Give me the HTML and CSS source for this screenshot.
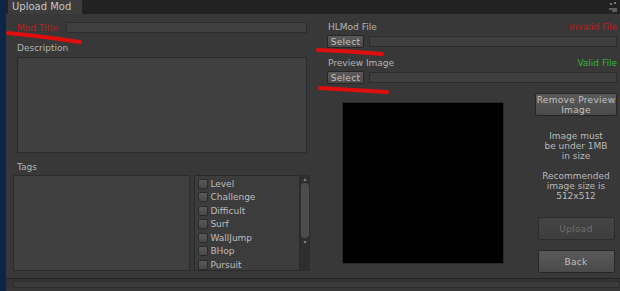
FILE: index.html
```html
<!DOCTYPE html>
<html lang="en">
<head>
    <meta charset="UTF-8">
    <title>Upload Mod</title>
    <link rel="stylesheet" href="styles.css">
</head>
<body>
    <div class="window">
        <div class="edge"></div>
        <div class="panel">
            <div class="tabbar">
                <div class="tab">Upload Mod</div>
                <div class="corner">
                    <svg width="10" height="12" viewBox="0 0 10 12">
                        <path d="M2 2h2v2H2zM6 1h2v2H6z" fill="#777"/>
                        <path d="M1 8h8M4 10h5" stroke="#999" stroke-width="1"/>
                    </svg>
                </div>
            </div>

            <div class="content">
                <div class="left">
                    <div class="title-row">
                        <span class="label red">Mod Title</span>
                        <div class="field title-field"></div>
                    </div>
                    <div class="label desc-label">Description</div>
                    <div class="field desc-field"></div>
                    <div class="label tags-label">Tags</div>
                    <div class="tags-row">
                        <div class="field tags-field"></div>
                        <div class="checklist">
                            <div class="check"><span class="box"></span>Level</div>
                            <div class="check"><span class="box"></span>Challenge</div>
                            <div class="check"><span class="box"></span>Difficult</div>
                            <div class="check"><span class="box"></span>Surf</div>
                            <div class="check"><span class="box"></span>WallJump</div>
                            <div class="check"><span class="box"></span>BHop</div>
                            <div class="check"><span class="box"></span>Pursuit</div>
                        </div>
                        <div class="scrollbar">
                            <span class="arrow">&#9652;</span>
                            <div class="thumb"></div>
                            <span class="arrow">&#9662;</span>
                        </div>
                    </div>
                </div>

                <div class="right">
                    <div class="file-head">
                        <span class="label">HLMod File</span>
                        <span class="status red">Invalid File</span>
                    </div>
                    <div class="file-row">
                        <button class="btn small">Select</button>
                        <div class="field path"></div>
                    </div>
                    <div class="file-head second">
                        <span class="label">Preview Image</span>
                        <span class="status green">Valid File</span>
                    </div>
                    <div class="file-row">
                        <button class="btn small">Select</button>
                        <div class="field path"></div>
                    </div>

                    <div class="preview-area">
                        <div class="preview"></div>
                        <div class="side">
                            <button class="btn remove">Remove Preview<br>Image</button>
                            <p class="note">Image must<br>be under 1MB<br>in size</p>
                            <p class="note">Recommended<br>image size is<br>512x512</p>
                            <button class="btn big disabled">Upload</button>
                            <button class="btn big">Back</button>
                        </div>
                    </div>
                </div>
            </div>

            <div class="hscroll"><div class="hbar"></div></div>
        </div>
    </div>

    <!-- hand-drawn red marks from the screenshot -->
    <svg class="marks" width="620" height="291" viewBox="0 0 620 291">
        <path d="M8 33 Q40 36 80 42" />
        <path d="M318 50 Q350 51 382 54" />
        <path d="M320 88 Q352 90 387 92" />
    </svg>
</body>
</html>
```

FILE: styles.css
```css
body {
    margin: 0;
    width: 620px;
    height: 291px;
    overflow: hidden;
    background-color: #383838;
    font-family: "DejaVu Sans", sans-serif;
    font-size: 9px;
    color: #b8b8b8;
    position: relative;
}
.window {
    display: flex;
    height: 291px;
}
.edge {
    width: 6px;
    background-color: #0c2446;
    flex-shrink: 0;
}
.panel {
    flex: 1;
    display: flex;
    flex-direction: column;
}
.tabbar {
    height: 14px;
    background-color: #222;
    display: flex;
    align-items: stretch;
}
.tab {
    margin-left: 2px;
    width: 74px;
    background-color: #3c3c3c;
    color: #c4c4c4;
    font-size: 10px;
    line-height: 14px;
    padding-left: 4px;
    box-sizing: border-box;
}
.corner {
    margin-left: auto;
    margin-right: 2px;
    padding-top: 1px;
}
.content {
    display: flex;
    flex: 1;
}
.left {
    width: 297px;
    padding-left: 7px;
    padding-top: 8px;
    display: flex;
    flex-direction: column;
}
.label {
    color: #b4b4b4;
}
.red {
    color: #c01818;
}
.green {
    color: #2cb82c;
}
.field {
    background-color: #404040;
    border: 1px solid #2c2c2c;
    box-sizing: border-box;
}
.title-row {
    display: flex;
    align-items: center;
    padding-left: 4px;
    height: 11px;
}
.title-row .label {
    width: 49px;
}
.title-field {
    flex: 1;
    height: 11px;
    margin-right: 3px;
}
.desc-label {
    margin-top: 10px;
    padding-left: 4px;
    height: 14px;
}
.desc-field {
    margin-left: 4px;
    margin-right: 3px;
    height: 96px;
}
.tags-label {
    margin-top: 9px;
    padding-left: 4px;
    height: 13px;
}
.tags-row {
    display: flex;
    height: 96px;
}
.tags-field {
    width: 178px;
    height: 96px;
}
.checklist {
    margin-left: 4px;
    width: 106px;
    height: 96px;
    background-color: #3c3c3c;
    border: 1px solid #2a2a2a;
    box-sizing: border-box;
    padding-top: 1px;
    padding-left: 3px;
}
.check {
    display: flex;
    align-items: center;
    height: 13.5px;
    color: #bcbcbc;
}
.box {
    width: 8px;
    height: 8px;
    margin-right: 2px;
    background: linear-gradient(#5a5a5a, #484848);
    border: 1px solid #2a2a2a;
    border-radius: 2px;
}
.scrollbar {
    width: 10px;
    height: 96px;
    background-color: #2e2e2e;
    display: flex;
    flex-direction: column;
    align-items: center;
}
.arrow {
    font-size: 6px;
    line-height: 8px;
    color: #8a8a8a;
}
.thumb {
    width: 8px;
    height: 55px;
    background-color: #4c4c4c;
    border-radius: 4px;
}
.right {
    flex: 1;
    padding-left: 17px;
    padding-right: 3px;
    padding-top: 8px;
}
.file-head {
    display: flex;
    justify-content: space-between;
    height: 13px;
    padding-left: 1px;
}
.file-head.second {
    margin-top: 10px;
}
.file-row {
    display: flex;
    align-items: center;
    height: 13px;
}
.btn {
    font-family: "DejaVu Sans", sans-serif;
    font-size: 9px;
    color: #c0c0c0;
    background: linear-gradient(#5a5a5a, #4a4a4a);
    border: 1px solid #262626;
    border-radius: 2px;
    padding: 0;
    letter-spacing: 0.3px;
}
.btn.small {
    width: 37px;
    height: 13px;
    line-height: 10px;
}
.path {
    flex: 1;
    height: 11px;
    margin-left: 5px;
    background-color: #3e3e3e;
}
.preview-area {
    display: flex;
    margin-top: 9px;
}
.preview {
    margin-left: 15px;
    margin-top: 9px;
    width: 162px;
    height: 162px;
    background-color: #000;
    border: 1px solid #2a2a2a;
    box-sizing: border-box;
}
.side {
    margin-left: auto;
    width: 82px;
    display: flex;
    flex-direction: column;
    align-items: center;
}
.btn.remove {
    width: 82px;
    height: 23px;
    line-height: 10px;
}
.note {
    margin: 0;
    text-align: center;
    line-height: 10px;
    color: #b8b8b8;
}
.btn.remove + .note {
    margin-top: 15px;
}
.note + .note {
    margin-top: 10px;
}
.btn.big {
    width: 77px;
    height: 23px;
    margin-top: 10px;
}
.note + .btn.big {
    margin-top: 16px;
}
.btn.disabled {
    color: #6e6e6e;
    background: linear-gradient(#444, #3e3e3e);
    border-color: #2c2c2c;
}
.hscroll {
    margin-top: auto;
    margin-bottom: 2px;
    height: 11px;
    border-top: 1px solid #222;
    background-color: #343434;
    padding-top: 2px;
    padding-left: 7px;
    box-sizing: border-box;
}
.hbar {
    height: 5px;
    background-color: #3b3b3b;
    border: 1px solid #2e2e2e;
}
.marks {
    position: absolute;
    left: 0;
    top: 0;
    pointer-events: none;
}
.marks path {
    fill: none;
    stroke: #e00d0d;
    stroke-width: 4;
    stroke-linecap: round;
}
```
